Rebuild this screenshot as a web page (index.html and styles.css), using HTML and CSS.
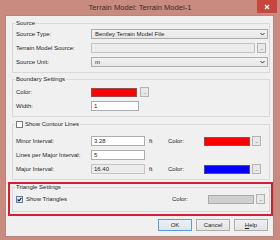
FILE: index.html
```html
<!DOCTYPE html>
<html>
<head>
<meta charset="utf-8">
<link rel="stylesheet" href="styles.css">
</head>
<body>
<div class="win">
  <div class="titlebar">
    <div class="title">Terrain Model: Terrain Model-1</div>
    <div class="close"><svg width="6" height="6" viewBox="0 0 6 6"><path d="M1 1L5 5M5 1L1 5" stroke="#fff" stroke-width="1.3"/></svg></div>
  </div>
  <div class="client">
    <div class="group g-source">
      <div class="legend">Source</div>
      <div class="rows r-source">
        <div class="row"><span class="lbl">Source Type:</span><div class="combo"><span>Bentley Terrain Model File</span><svg class="chev" width="5" height="4" viewBox="0 0 5 4"><path d="M0.5 1L2.5 3L4.5 1" fill="none" stroke="#333" stroke-width="1"/></svg></div></div>
        <div class="row"><span class="lbl">Terrain Model Source:</span><div class="text ro path"></div><div class="browse">...</div></div>
        <div class="row"><span class="lbl">Source Unit:</span><div class="combo"><span>m</span><svg class="chev" width="5" height="4" viewBox="0 0 5 4"><path d="M0.5 1L2.5 3L4.5 1" fill="none" stroke="#333" stroke-width="1"/></svg></div></div>
      </div>
    </div>

    <div class="group g-boundary">
      <div class="legend">Boundary Settings</div>
      <div class="rows r-boundary">
        <div class="row"><span class="lbl">Color:</span><div class="swatch sw-small red"></div><div class="browse b-small">...</div></div>
        <div class="row"><span class="lbl">Width:</span><div class="text w-width">1</div></div>
      </div>
    </div>

    <div class="group g-contour">
      <div class="legend chk-legend"><span class="chk"></span><span>Show Contour Lines</span></div>
      <div class="rows r-contour">
        <div class="row"><span class="lbl">Minor Interval:</span><div class="text w-num">3.28</div><span class="unit">ft</span><span class="clbl">Color:</span><div class="swatch sw red"></div><div class="browse">...</div></div>
        <div class="row"><span class="lbl">Lines per Major Interval:</span><div class="text w-num">5</div></div>
        <div class="row"><span class="lbl">Major Interval:</span><div class="text ro w-num">16.40</div><span class="unit">ft</span><span class="clbl">Color:</span><div class="swatch sw blue"></div><div class="browse">...</div></div>
      </div>
    </div>

    <div class="highlight">
      <div class="group g-triangle">
        <div class="legend">Triangle Settings</div>
        <div class="rows r-triangle">
          <div class="row"><div class="tri-left"><span class="chk checked"><svg width="5" height="5" viewBox="0 0 5 5"><path d="M0.6 2.5L2 4L4.4 0.8" fill="none" stroke="#1a1a1a" stroke-width="1.1"/></svg></span><span>Show Triangles</span></div><span class="clbl">Color:</span><div class="swatch sw gray"></div><div class="browse">...</div></div>
        </div>
      </div>
    </div>

    <div class="buttons">
      <div class="btn default">OK</div>
      <div class="btn">Cancel</div>
      <div class="btn"><span class="u">H</span>elp</div>
    </div>
  </div>
</div>
</body>
</html>
```

FILE: styles.css
```css
* { box-sizing: border-box; }
html, body { margin: 0; padding: 0; }
body {
  width: 280px;
  height: 240px;
  overflow: hidden;
  background: #c98b80;
  font-family: "Liberation Sans", Arial, sans-serif;
  font-size: 6px;
  color: #1e1e1e;
}
.win {
  width: 280px;
  height: 240px;
  display: flex;
  flex-direction: column;
}
.titlebar {
  height: 16px;
  display: flex;
  align-items: flex-start;
}
.title {
  flex: 1;
  padding-left: 23px;
  text-align: center;
  font-size: 7.6px;
  line-height: 15px;
  color: #3a2a28;
}
.close {
  width: 20px;
  height: 13px;
  margin-right: 3px;
  background: #c9463e;
  display: flex;
  align-items: center;
  justify-content: center;
}
.client {
  margin-left: 6px;
  width: 267px;
  height: 220px;
  background: #f0f0f0;
  box-shadow: 0 0 0 1px #b9857c;
  display: flex;
  flex-direction: column;
  align-items: flex-start;
}
.group {
  width: 258px;
  border: 1px solid #d9d9d9;
  padding: 0 1px 5px 3px;
  margin-left: 6px;
}
.legend {
  height: 7px;
  line-height: 7px;
  margin-top: -4px;
  margin-left: -1px;
  padding: 0 1px;
  background: #f0f0f0;
  width: fit-content;
}
.chk-legend {
  height: 9px;
  margin-top: -5px;
  display: flex;
  align-items: center;
  gap: 2px;
  margin-left: -1px;
}
.rows {
  display: flex;
  flex-direction: column;
  gap: 4px;
}
.row {
  height: 10px;
  display: flex;
  align-items: center;
}
.lbl { width: 75px; flex: none; }

.g-source { margin-top: 7px; }
.r-source { padding-top: 2px; }
.g-boundary { margin-top: 6px; }
.r-boundary { padding-top: 4px; }
.g-contour { margin-top: 7px; }
.r-contour { padding-top: 7px; }

.combo {
  width: 177px;
  height: 10px;
  border: 1px solid #acacac;
  background: linear-gradient(#f2f2f2, #e6e6e6);
  display: flex;
  align-items: center;
  justify-content: space-between;
  padding: 0 2px 0 3px;
}
.chev { flex: none; }
.text {
  height: 10px;
  border: 1px solid #abadb3;
  background: #fff;
  padding-left: 2px;
  line-height: 8px;
}
.text.ro { background: #ececec; border-color: #c4c4c4; }
.path { width: 164px; background: #f6f6f6; }
.w-width { width: 48px; }
.w-num { width: 54px; }
.browse {
  width: 9px;
  height: 10px;
  margin-left: 2px;
  border: 1px solid #b3b3b3;
  background: #e8e8e8;
  font-size: 5px;
  line-height: 9px;
  text-align: center;
  color: #555;
  letter-spacing: -0.5px;
}
.b-small { margin-left: 3px; }
.swatch {
  height: 9px;
  border: 1px solid #8c8c8c;
}
.sw-small { width: 46px; }
.sw { width: 46px; }
.red { background: #ff0000; border-color: #9a4a4a; }
.blue { background: #0000ff; border-color: #4a4a9a; }
.gray { background: #cfcfcf; border-color: #a9a9a9; }
.unit { width: 23px; padding-left: 4px; flex: none; }
.clbl { width: 36px; flex: none; }
.chk {
  width: 7px;
  height: 7px;
  border: 1px solid #7a7a7a;
  background: #fff;
  display: flex;
  align-items: center;
  justify-content: center;
  flex: none;
}
.chk.checked { background: #dfeaf7; border-color: #5a7fae; }

.highlight {
  margin-top: 2px;
  margin-left: 2px;
  width: 265px;
  border: 2px solid #d2202f;
  padding: 3px 0 2px 2px;
}
.g-triangle { margin-left: 0; }
.r-triangle { padding-top: 3px; }
.g-triangle { padding-bottom: 7px; }
.tri-left {
  width: 156px;
  display: flex;
  align-items: center;
  gap: 3px;
  flex: none;
}

.buttons {
  margin-top: 3px;
  margin-left: 152px;
  display: flex;
  gap: 4px;
}
.btn {
  width: 34px;
  height: 12px;
  border: 1px solid #adadad;
  background: linear-gradient(#f0f0f0, #e3e3e3);
  text-align: center;
  line-height: 10px;
}
.btn.default { border-color: #4f9fe0; }
.u { text-decoration: underline; }
```
